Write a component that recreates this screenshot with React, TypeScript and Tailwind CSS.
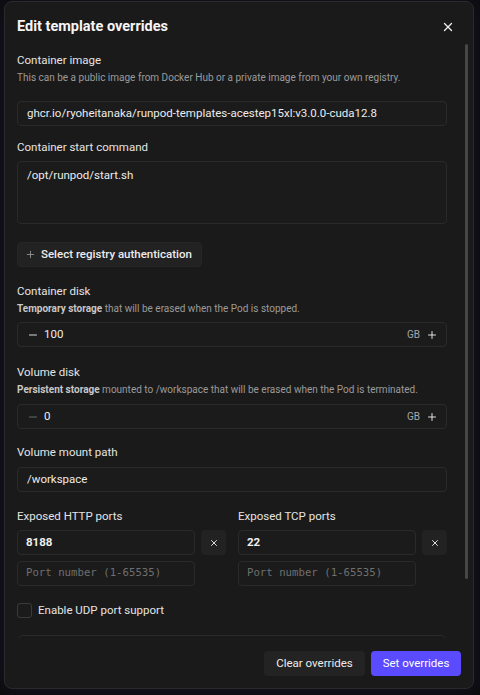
import { Plus, Minus, X } from "lucide-react";

const font = { fontFamily: 'Roboto, "Noto Sans", Arial, sans-serif' };
const mono = { fontFamily: '"DejaVu Sans Mono", "Liberation Mono", monospace' };

const Label = ({ children }: { children: React.ReactNode }) => (
    <div className="text-[11.5px] leading-[18px] text-[#e4e4e4]">{children}</div>
);

const Hint = ({ children }: { children: React.ReactNode }) => (
    <div className="text-[10px] leading-[14px] text-[#9b9b9b] mt-[2px]">{children}</div>
);

const Field = ({ value, className = "" }: { value: string; className?: string }) => (
    <div className={`h-[25px] rounded-[4px] border border-[#2a2a2a] bg-[#1b1b1b] flex items-center px-[9px] text-[11.5px] text-[#ececec] ${className}`}>
        {value}
    </div>
);

const DiskField = ({ value, dim }: { value: string; dim?: boolean }) => (
    <div className="h-[25px] rounded-[4px] border border-[#2a2a2a] bg-[#1b1b1b] flex items-center pl-[9px] pr-[8px] text-[11.5px] text-[#ececec]">
        <Minus size={12} strokeWidth={2} className={dim ? "text-[#6a6a6a]" : "text-[#d8d8d8]"} />
        <span className="ml-[5px]">{value}</span>
        <span className="ml-auto text-[10px] text-[#a8a8a8]">GB</span>
        <Plus size={12} strokeWidth={2} className="ml-[6px] text-[#e2e2e2]" />
    </div>
);

const PortColumn = ({ title, port }: { title: string; port: string }) => (
    <div className="flex-1">
        <Label>{title}</Label>
        <div className="mt-[5px] flex gap-[6px]">
            <div className="flex-1 h-[25px] rounded-[4px] border border-[#2a2a2a] bg-[#1b1b1b] flex items-center px-[8px] text-[11.5px] font-bold text-[#f0f0f0]">
                {port}
            </div>
            <button className="w-[25px] h-[25px] rounded-[4px] bg-[#222222] flex items-center justify-center text-[#dcdcdc]">
                <X size={10} strokeWidth={2.4} />
            </button>
        </div>
        <div className="mt-[6px] mr-[31px] h-[25px] rounded-[4px] border border-[#2a2a2a] bg-[#1b1b1b] flex items-center px-[8px] text-[10.7px] text-[#6f6f6f]" style={mono}>
            Port number (1-65535)
        </div>
    </div>
);

const App = () => {
    return (
        <main className="w-[480px] h-[695px] bg-[#0c0c0d] overflow-hidden pt-[1px] pl-[4px]" style={font}>
            <div className="w-[470px] h-[688px] rounded-[8px] border border-[#2a2a2a] bg-[#1a1a1a] flex flex-col shadow-[0_0_20px_rgba(90,70,200,0.15)]">

                <div className="h-[42px] flex items-center pl-[12px] pr-[18px] pt-[8px]">
                    <h2 className="text-[14.5px] font-bold text-[#f5f5f5]">Edit template overrides</h2>
                    <X size={14} strokeWidth={2.2} className="ml-auto text-[#f0f0f0]" />
                </div>

                <div className="flex-1 flex overflow-hidden">
                    <div className="w-[430px] ml-[12px] pt-[7px]">
                        <Label>Container image</Label>
                        <Hint>This can be a public image from Docker Hub or a private image from your own registry.</Hint>
                        <Field className="mt-[16px]" value="ghcr.io/ryoheitanaka/runpod-templates-acestep15xl:v3.0.0-cuda12.8" />

                        <div className="mt-[12px]">
                            <Label>Container start command</Label>
                        </div>
                        <div className="mt-[5px] h-[63px] rounded-[4px] border border-[#2a2a2a] bg-[#1b1b1b] px-[9px] pt-[5px] text-[11.5px] text-[#ececec]">
                            /opt/runpod/start.sh
                        </div>

                        <button className="mt-[18px] h-[25px] w-[185px] rounded-[4px] border border-[#262626] bg-[#222222] flex items-center pl-[7px] gap-[5px] text-[11.5px] font-medium text-[#ececec] whitespace-nowrap">
                            <Plus size={11} strokeWidth={1.6} className="text-[#a9a9a9]" />
                            Select registry authentication
                        </button>

                        <div className="mt-[15px]">
                            <Label>Container disk</Label>
                            <Hint><b className="font-bold text-[#c8c8c8]">Temporary storage</b> that will be erased when the Pod is stopped.</Hint>
                        </div>
                        <div className="mt-[6px]">
                            <DiskField value="100" />
                        </div>

                        <div className="mt-[16px]">
                            <Label>Volume disk</Label>
                            <Hint><b className="font-bold text-[#c8c8c8]">Persistent storage</b> mounted to /workspace that will be erased when the Pod is terminated.</Hint>
                        </div>
                        <div className="mt-[7px]">
                            <DiskField value="0" dim />
                        </div>

                        <div className="mt-[14px]">
                            <Label>Volume mount path</Label>
                        </div>
                        <Field className="mt-[6px]" value="/workspace" />

                        <div className="mt-[15px] flex gap-[12px]">
                            <PortColumn title="Exposed HTTP ports" port="8188" />
                            <PortColumn title="Exposed TCP ports" port="22" />
                        </div>

                        <label className="mt-[16px] flex items-center gap-[6px] text-[11.5px] text-[#e4e4e4]">
                            <span className="w-[15px] h-[15px] rounded-[3px] border border-[#3a3a3a] bg-[#1b1b1b]" />
                            Enable UDP port support
                        </label>

                        <div className="mt-[16px] h-[40px] rounded-[6px] border border-[#2a2a2a]" />
                    </div>

                    <div className="ml-[18px]">
                        <div className="w-[3px] h-[535px] rounded-full bg-[#474747]" />
                    </div>
                </div>

                <div className="h-[50px] flex items-center justify-end gap-[6px] pr-[12px] pt-[1px]">
                    <button className="h-[25px] w-[101px] rounded-[4px] bg-[#232323] text-[11.5px] text-[#ececec]">Clear overrides</button>
                    <button className="h-[25px] w-[90px] rounded-[4px] bg-[#5b4bff] text-[11.5px] text-white">Set overrides</button>
                </div>
            </div>
        </main>
    );
};
export default App;
